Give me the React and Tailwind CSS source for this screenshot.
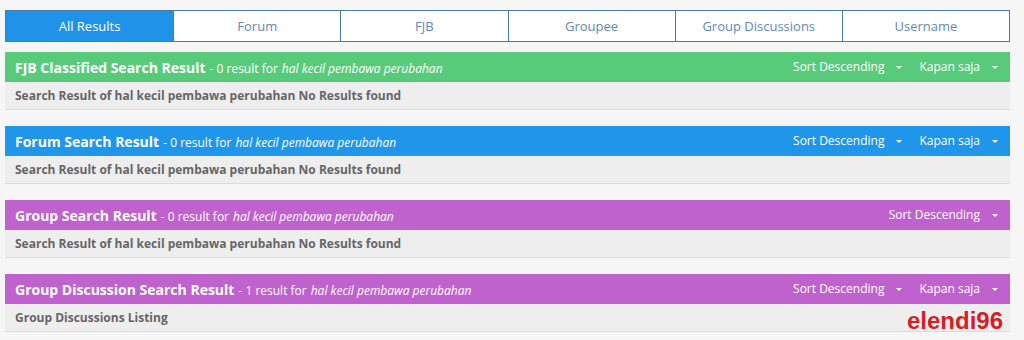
import React from "react";

const tabs = ["All Results", "Forum", "FJB", "Groupee", "Group Discussions", "Username"];

function Caret() {
  return (
    <svg width="6" height="4" viewBox="0 0 6 4" className="ml-[12px] mt-[1px]">
      <path d="M0 0 L6 0 L3 3 Z" fill="currentColor" />
    </svg>
  );
}

function Section({ color, title, count, showKapan = true, body }) {
  return (
    <div className="mb-[16px]">
      <div className={`flex h-[30px] items-center justify-between pl-[10px] pr-[12px] text-white ${color}`}>
        <div className="flex items-baseline whitespace-nowrap">
          <span className="text-[14px] font-bold">{title}</span>
          <span className="ml-[4px] text-[12px]">- {count} result for </span>
          <span className="ml-[4px] text-[12px] italic">hal kecil pembawa perubahan</span>
        </div>
        <div className="flex items-center text-[12px]">
          <span className="flex items-center">Sort Descending<Caret /></span>
          {showKapan && <span className="ml-[17px] flex items-center">Kapan saja<Caret /></span>}
        </div>
      </div>
      <div className="flex h-[28px] items-center border-b border-[#dcdcdc] bg-[#eeeeee] pl-[10px] text-[12px] font-bold text-[#666666]">
        {body}
      </div>
    </div>
  );
}

export default function App() {
  return (
    <div className="h-[340px] w-[1024px] bg-[#f6f6f6] pl-[5px] pr-[14px] pt-[10px]" style={{ fontFamily: '"Open Sans", sans-serif' }}>
      <div className="relative">
        <div className="mb-[10px] grid h-[32px] grid-cols-6 border border-[#4b7ca6] bg-white">
          {tabs.map((t, i) => (
            <div
              key={t}
              className={`flex items-center justify-center pt-[2px] text-[13px] ${i > 0 ? "border-l border-[#4b7ca6]" : ""} ${i === 0 ? "bg-[#1e93e8] text-white" : "text-[#6089b2]"}`}
            >
              {t}
            </div>
          ))}
        </div>
        <Section color="bg-[#58cb7b]" title="FJB Classified Search Result" count="0" body="Search Result of hal kecil pembawa perubahan No Results found" />
        <Section color="bg-[#1f96ea]" title="Forum Search Result" count="0" body="Search Result of hal kecil pembawa perubahan No Results found" />
        <Section color="bg-[#c062ce]" title="Group Search Result" count="0" showKapan={false} body="Search Result of hal kecil pembawa perubahan No Results found" />
        <Section color="bg-[#c062ce]" title="Group Discussion Search Result" count="1" body="Group Discussions Listing" />
        <div className="absolute right-[7px] top-[299px] text-[24px] font-bold leading-none text-[#d21f2a]" style={{ fontFamily: '"Liberation Sans", Arial, sans-serif' }}>
          elendi96
        </div>
      </div>
    </div>
  );
}
